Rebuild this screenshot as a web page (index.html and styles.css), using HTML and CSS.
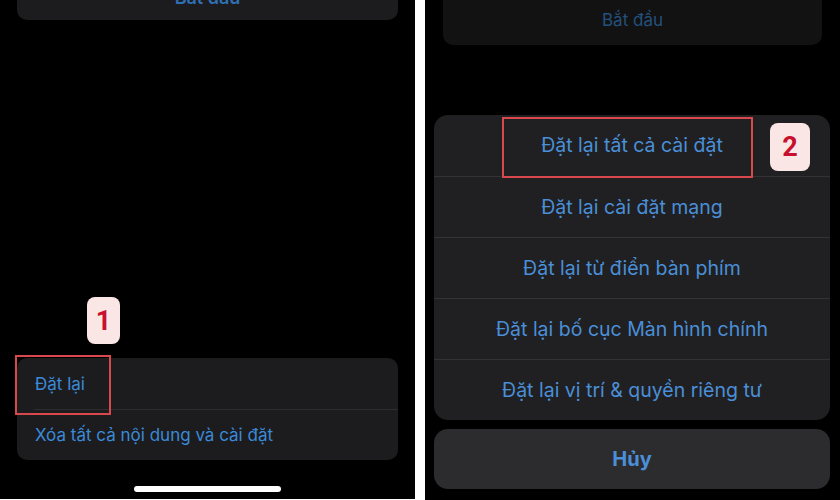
FILE: index.html
```html
<!DOCTYPE html>
<html lang="vi">
<head>
<meta charset="utf-8">
<link rel="stylesheet" href="styles.css">
</head>
<body>
<div class="page">
  <section class="panel panel-left">
    <div class="top-card"><div class="top-text">Bắt đầu</div></div>
    <div class="badge badge-1">1</div>
    <div class="list-card">
      <div class="list-row">Đặt lại</div>
      <div class="list-row">Xóa tất cả nội dung và cài đặt</div>
      <div class="mark mark-1"></div>
    </div>
    <div class="home-bar"></div>
  </section>
  <section class="panel panel-right">
    <div class="top-card-dim">Bắt đầu</div>
    <div class="sheet">
      <div class="sheet-row">Đặt lại tất cả cài đặt</div>
      <div class="sheet-row">Đặt lại cài đặt mạng</div>
      <div class="sheet-row">Đặt lại từ điển bàn phím</div>
      <div class="sheet-row">Đặt lại bố cục Màn hình chính</div>
      <div class="sheet-row">Đặt lại vị trí &amp; quyền riêng tư</div>
      <div class="mark mark-2"></div>
      <div class="badge badge-2">2</div>
    </div>
    <div class="cancel">Hủy</div>
  </section>
</div>
</body>
</html>
```

FILE: styles.css
```css
* { box-sizing: border-box; }
html, body { margin: 0; padding: 0; background: #ffffff; }
body { font-family: Inter, "Noto Sans", "Liberation Sans", sans-serif; }

.page {
  display: flex;
  gap: 10px;
  width: 840px;
  height: 500px;
}

.panel {
  width: 415px;
  background: #000;
  display: flex;
  flex-direction: column;
  position: relative;
}

.panel-left {
  height: 499px;
  padding: 0 17px 7px 17px;
}

.top-card {
  height: 20px;
  background: #1c1c1e;
  border-radius: 0 0 10px 10px;
  overflow: hidden;
  text-align: center;
}
.top-text {
  margin-top: -12px;
  font-size: 18px;
  line-height: 20px;
  font-weight: 600;
  color: #2f6fb5;
}

.list-card {
  margin-top: auto;
  background: #1c1c1e;
  border-radius: 10px;
  position: relative;
}
.list-row {
  height: 51px;
  display: flex;
  align-items: center;
  padding-left: 18px;
  font-size: 17px;
  color: #3b8ad8;
}
.list-row + .list-row {
  border-top: 1px solid #2e2e30;
  margin-left: 17px;
  padding-left: 1px;
}

.home-bar {
  margin: 26px auto 0;
  width: 147px;
  height: 6px;
  border-radius: 3px;
  background: #ffffff;
}

.mark {
  position: absolute;
  border: 2px solid #d9484c;
}
.mark-1 {
  left: -2px;
  top: -3px;
  width: 96px;
  height: 60px;
}

.badge {
  position: absolute;
  background: #fbe6e6;
  color: #c8102e;
  font-weight: 700;
  border-radius: 8px;
  display: flex;
  align-items: center;
  justify-content: center;
  font-family: Roboto, "Liberation Sans", sans-serif;
}
.badge-1 {
  left: 87px;
  top: 297px;
  width: 33px;
  height: 47px;
  font-size: 27px;
}

.panel-right {
  height: 500px;
  padding: 0 10px 11px 9px;
}

.top-card-dim {
  margin: 0 8px 0 9px;
  height: 45px;
  background: #121212;
  border-radius: 0 0 10px 10px;
  display: flex;
  align-items: center;
  justify-content: center;
  padding-bottom: 4px;
  font-size: 17px;
  color: #24507e;
}

.sheet {
  margin-top: 70px;
  background: #202022;
  border-radius: 14px;
  position: relative;
}
.sheet-row {
  height: 61px;
  display: flex;
  align-items: center;
  justify-content: center;
  font-size: 19.5px;
  color: #4a8fd8;
}
.sheet-row + .sheet-row {
  border-top: 1px solid #333335;
}
.mark-2 {
  left: 68px;
  top: 2px;
  width: 251px;
  height: 61px;
}
.badge-2 {
  left: 336px;
  top: 8px;
  width: 40px;
  height: 48px;
  font-size: 27px;
}

.cancel {
  margin-top: 9px;
  height: 61px;
  background: #2c2c2e;
  border-radius: 14px;
  display: flex;
  align-items: center;
  justify-content: center;
  font-size: 20px;
  font-weight: 700;
  color: #4a8fd8;
}
```
